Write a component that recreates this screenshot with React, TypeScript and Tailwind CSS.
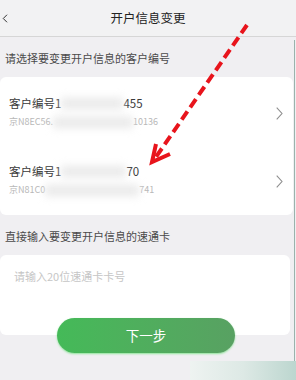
import { ChevronLeft } from "lucide-react"

type Row = {
  head: string
  headTail: string
  headBlur: number
  sub: string
  subTail: string
  subBlur: number
  h: string
  pt: string
}

const rows: Row[] = [
  { head: "客户编号1", headTail: "455", headBlur: 62, sub: "京N8EC56.", subTail: "10136", subBlur: 80, h: "h-[66px]", pt: "pt-[18px]" },
  { head: "客户编号1", headTail: "70", headBlur: 65, sub: "京N81C0", subTail: "741", subBlur: 94, h: "h-[72px]", pt: "pt-[20px]" },
]

function Blur({ w }: { w: number }) {
  // masked part of the number
  return <span className="inline-block h-[11px] bg-[#e9e9e9] blur-[4px] align-middle" style={{ width: w }} />
}

export default function App() {
  return (
    <div
      className="relative w-[296px] h-[380px] overflow-hidden bg-[#f0eff2] text-[#333]"
      style={{ fontFamily: '"Noto Sans CJK SC", "Noto Sans", sans-serif' }}
    >
      {/* header */}
      <div className="relative h-[37px] flex items-center justify-center border-b border-[#d6d6d6] bg-[#f2f2f3]">
        <ChevronLeft className="absolute left-[-2px] top-[11px] w-[14px] h-[15px] text-[#222]" strokeWidth={1.6} />
        <span className="text-[12.5px] text-[#222]">开户信息变更</span>
      </div>

      <div className="h-[40px] pl-[5px] pt-[13px] text-[11px] leading-[16px] text-[#4a4a4a]">请选择要变更开户信息的客户编号</div>

      <div className="mr-[3px] rounded-[6px] bg-white">
        {rows.map((r, i) => (
          <div key={i} className={`${r.h} ${r.pt} relative flex items-start pl-[9px] pr-[10px]`}>
            <div className="flex-1">
              <div className="flex items-center text-[11.5px] leading-[16px] text-[#3a3a3a]">
                <span>{r.head}</span>
                <Blur w={r.headBlur} />
                <span>{r.headTail}</span>
              </div>
              <div className="mt-[4px] flex items-center text-[9px] leading-[14px] text-[#b8b8b8]">
                <span>{r.sub}</span>
                <Blur w={r.subBlur} />
                <span>{r.subTail}</span>
              </div>
            </div>
            <svg className="mt-[12px]" width="7" height="13" viewBox="0 0 7 13">
              <polyline points="0.7,0.7 6,6.5 0.7,12.3" fill="none" stroke="#8e8e8e" strokeWidth="1.1" />
            </svg>
          </div>
        ))}
      </div>

      <div className="h-[40px] pl-[5px] pt-[13px] text-[11px] leading-[16px] text-[#4a4a4a]">直接输入要变更开户信息的速通卡</div>

      <div className="mr-[6px] h-[80px] rounded-[6px] bg-white pl-[14px] pt-[13px] text-[11px] leading-[16px] text-[#c6c6c6]">
        请输入20位速通卡卡号
      </div>

      <div className="-mt-[17px] ml-[57px] w-[178px] h-[35px] rounded-full bg-gradient-to-r from-[#44ba58] to-[#58a162] shadow-[0_1px_2px_#8fe59a] flex items-center justify-center">
        <span className="text-[13.5px] text-white">下一步</span>
      </div>

      {/* overlays from the capture */}
      <div className="absolute right-[1px] top-[40px] bottom-0 w-[1px] bg-[#9ab3ac]" />
      <div className="absolute left-[190px] top-[361px] right-0 bottom-0 bg-gradient-to-r from-[#eef3f1] via-[#dde9e5] to-[#bcd6cf]" />

      <svg className="absolute inset-0 pointer-events-none" width="296" height="380" viewBox="0 0 296 380">
        <g stroke="#e8141c" strokeWidth="4" fill="none" strokeLinecap="butt">
          <line x1="247" y1="25" x2="156" y2="157" strokeDasharray="10 5" />
          <polyline points="156,144 152,162 170,154" strokeLinejoin="miter" strokeWidth="4" />
        </g>
      </svg>
    </div>
  )
}
